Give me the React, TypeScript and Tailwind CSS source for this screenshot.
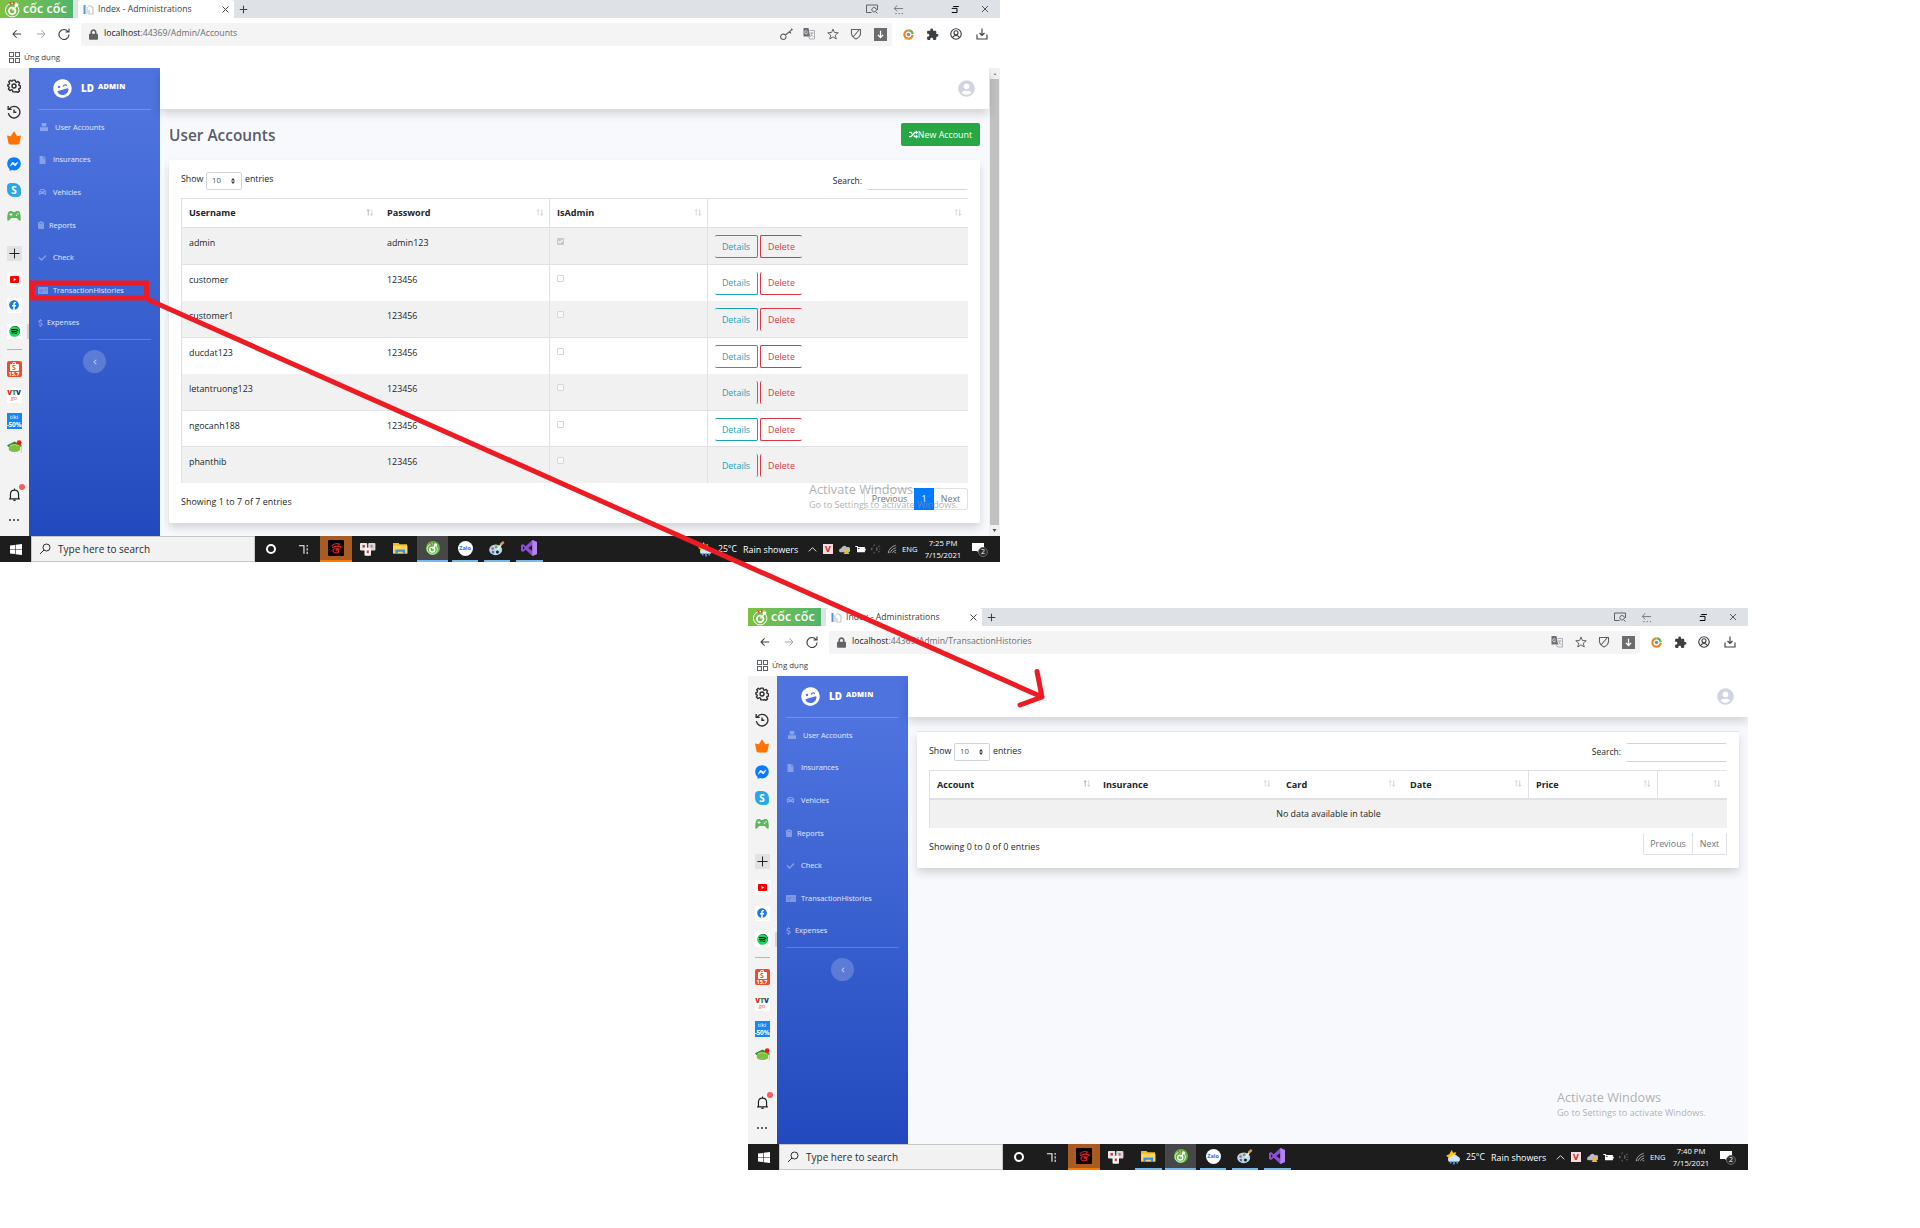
import type { ReactNode } from "react";
import {
  FaCar,
  FaCheck,
  FaChevronLeft,
  FaClipboard,
  FaDollarSign,
  FaFacebook,
  FaFacebookMessenger,
  FaFile,
  FaLaughWink,
  FaLock,
  FaRandom,
  FaSpotify,
  FaUserCircle,
} from "react-icons/fa";
import { MdExtension } from "react-icons/md";

/* ---------- small drawings ---------- */

function CocCocMark({ className }: { className: string }) {
  return (
    <svg viewBox="0 0 24 24" className={className} fill="none">
      <circle cx="11.5" cy="13" r="9.5" stroke="#fff" strokeWidth="1.4" />
      <circle cx="11.5" cy="14" r="4.6" stroke="#fff" strokeWidth="2.6" />
      <path d="M12 13 L20 4" stroke="#fff" strokeWidth="2" />
      <path d="M8 1.5 l2.5 4 M13.5 1 l0.5 4" stroke="#e8452c" strokeWidth="2.2" />
      <path d="M15 6 h5 M17 2 v5" stroke="#fff" strokeWidth="1.8" />
    </svg>
  );
}

function Line({ d, className, w = 1.6 }: { d: string; className: string; w?: number }) {
  return (
    <svg viewBox="0 0 24 24" className={className} fill="none" stroke="currentColor" strokeWidth={w}>
      <path d={d} />
    </svg>
  );
}

const gear =
  "M10 2h4l.7 2.8 1.8.8 2.5-1.5 2.6 2.7-1.4 2.6.7 1.7 2.6.7v3.6l-2.7.7-.8 1.9 1.5 2.500-2.700 2.600-2.500-1.500-1.800.8L14 22h-4l-.7-2.800-1.800-.8L5 19.900l-2.600-2.700 1.400-2.500-.7-1.700L1.500 12.300V9.800l2.200-.7.8-1.800L3 4.800l2.700-2.600L8 3.800l1.400-.6z";

function GearIcon() {
  return (
    <svg viewBox="0 0 24 24" className="size-[14px] text-[#2d2d2d]" fill="none" stroke="currentColor" strokeWidth="2.400">
      <path d={gear} strokeLinejoin="round" />
      <circle cx="12" cy="12" r="3.400" />
    </svg>
  );
}

function HistoryIcon() {
  return (
    <svg viewBox="0 0 24 24" className="size-[14px] text-[#2d2d2d]" fill="none" stroke="currentColor" strokeWidth="2.300">
      <path d="M4 6.500A10 10 0 1 1 2.300 14M2 1.500V7.500H8M12 7.500V12.500H16" />
    </svg>
  );
}

function CrownIcon() {
  return (
    <svg viewBox="0 0 24 24" className="size-[14px]" fill="#ff7300">
      <path d="M0 7.500 6.500 9 12 0.500 17.500 9 24 7.500 21.500 21Q21 23 19 23H5Q3 23 2.500 21Z" />
    </svg>
  );
}

function SkypeIcon() {
  return (
    <div className="relative flex size-[14px] items-center justify-center rounded-full bg-[#28a8ea] text-[10px]/[14px] font-bold text-white">
      <i className="absolute top-0 left-0 size-[8px] rounded-full bg-[#28a8ea]" />
      <i className="absolute right-0 bottom-0 size-[8px] rounded-full bg-[#28a8ea]" />
      <span className="relative">S</span>
    </div>
  );
}

function GamepadIcon() {
  return (
    <svg viewBox="0 0 28 20" className="h-[10px] w-[14px]">
      <path d="M6 0H10L12 2H16L18 0H22Q26 0 27 8T27 19Q24 21 20 14H8Q4 21 1 19 0 15 1 8T6 0Z" fill="#5cb85c" />
      <path d="M8 4V10M5 7H11" stroke="#f3f3f3" strokeWidth="2" />
      <circle cx="19" cy="8.500" r="1.500" fill="#f3f3f3" />
      <circle cx="22" cy="5.500" r="1.500" fill="#f3f3f3" />
    </svg>
  );
}

function ShopeeIcon() {
  return (
    <div className="flex h-[16px] w-[15px] flex-col items-center justify-center rounded-[2px] bg-[#ee4d2d] text-white">
      <i className="h-[2px] w-[4px] rounded-t-full border border-b-0 border-white" />
      <div className="flex h-[7px] w-[9px] items-center justify-center rounded-[1px] bg-white text-[7px]/[7px] font-bold text-[#ee4d2d]">
        S
      </div>
      <span className="text-[5.500px]/[6px] font-bold">15.7</span>
    </div>
  );
}

function HatIcon() {
  return (
    <svg viewBox="0 0 24 22" className="h-[14px] w-[15px]">
      <path d="M0 8 12 2 24 8 22 11H2Z" fill="#2e8b45" />
      <path d="M3 9Q12 5 21 9V16Q12 22 3 16Z" fill="#7cc142" />
      <path d="M5 8.500Q12 6 19 8.500" stroke="#f2d04a" strokeWidth="1.500" fill="none" />
      <path d="M23 8V20" stroke="#f0c93c" strokeWidth="1.500" />
      <circle cx="19.500" cy="4" r="3.800" fill="#f5191b" />
    </svg>
  );
}

function WindowsLogo() {
  return (
    <svg viewBox="0 0 12 12" className="h-[11px] w-[12px]" fill="#fff" preserveAspectRatio="none">
      <path d="M0 1.700 5 1V5.600H0ZM5.600.9 12 0V5.600H5.600ZM0 6.300H5V11L0 10.300ZM5.600 6.300H12V12L5.600 11.100Z" />
    </svg>
  );
}

function FolderIcon() {
  return (
    <svg viewBox="0 0 16 14" className="h-[13px] w-[15px]">
      <path d="M0 1H6L7 2.500H15V12H0Z" fill="#f5b921" />
      <path d="M0 4H15.500V12.500H0Z" fill="#ffd75e" />
      <path d="M2.500 13V8H13V13H10.500V10.500H5V13Z" fill="#3a93dd" />
    </svg>
  );
}

function PaintIcon() {
  return (
    <svg viewBox="0 0 18 16" className="h-[15px] w-[16px]">
      <ellipse cx="7.500" cy="9.500" rx="7.300" ry="6" fill="#bcd9ec" />
      <circle cx="4" cy="8" r="1.500" fill="#e8553a" />
      <circle cx="8" cy="6.200" r="1.500" fill="#59b04c" />
      <circle cx="4.500" cy="12" r="1.500" fill="#3d72c4" />
      <circle cx="9.500" cy="12" r="1.700" fill="#1e1e1e" />
      <path d="M9.500 9.500 14 3" stroke="#e8eef2" strokeWidth="2" />
      <path d="M13 4 16.500.5" stroke="#dd9a54" strokeWidth="2.800" />
    </svg>
  );
}

function VisualStudioIcon() {
  return (
    <svg viewBox="0 0 24 24" className="size-[16px]">
      <path d="M17 0 24 3V21L17 24 7 14.500 3 18 0 16.500V7.500L3 6 7 9.500ZM17 7.500 11 12 17 16.500ZM3 9.500V14.500L5.500 12Z" fill="#8a4fd3" fillRule="evenodd" />
      <path d="M17 0 24 3V21L17 24Z" fill="#b583f0" />
    </svg>
  );
}

function WeatherIcon() {
  return (
    <svg viewBox="0 0 16 16" className="size-[15px]">
      <path d="M6 0 7.500 3 11 2.500 9.500 6 11 9 6 9 2 11 2.500 8 0 6 3.500 4.500Z" fill="#fcc419" />
      <path d="M3 12.500A3 3 0 0 1 5.500 7.500 4 4 0 0 1 12.500 7 3 3 0 0 1 13.500 12.500Z" fill="#cfe6fa" />
      <path d="M5 12V14.500M8.500 12V15.500M12 12V14.500" stroke="#4ba3ef" strokeWidth="1.700" />
    </svg>
  );
}

function GarenaIcon() {
  return (
    <div className="flex size-[16px] items-center justify-center rounded-[1px] bg-[#0c0606]">
      <svg viewBox="0 0 16 16" className="size-[14px]" fill="none" stroke="#dc1f26" strokeWidth="1.300">
        <path d="M3 5.800Q7 1.500 12 3.500L10 5M3.500 7.800Q8 4.500 14 7L12.500 7.500M12.300 9H8V10.500H11V12.800Q6.500 14.500 5 12.300 3.800 10 6.500 8.300" />
      </svg>
    </div>
  );
}

function SolitaireIcon() {
  return (
    <svg viewBox="0 0 16 13" className="h-[13px] w-[16px]">
      <rect x="0" y="0" width="7.200" height="7.500" rx="1" fill="#e9e9ea" />
      <rect x="8.200" y="0" width="7.200" height="7.500" rx="1" fill="#d9d9dc" />
      <rect x="4.500" y="4.800" width="6.500" height="8" rx="1" fill="#f5f5f5" />
      <rect x="2.500" y="2" width="2.400" height="2.600" fill="#d8333d" />
      <rect x="10.600" y="2" width="2" height="2.600" fill="#d56a73" />
      <rect x="6.800" y="7.500" width="2" height="2.600" fill="#d8333d" />
    </svg>
  );
}

function UserGlyph() {
  return (
    <svg viewBox="0 0 14 16" className="mr-[7px] h-[8px] w-[8px]" fill="currentColor" preserveAspectRatio="none">
      <path d="M3 0H11V7H3ZM0 8.500H14V16H0Z" />
    </svg>
  );
}

function CardGlyph() {
  return (
    <svg viewBox="0 0 10 7" className="mr-[5px] h-[7px] w-[10px]">
      <rect width="10" height="7" rx="0.600" fill="currentColor" />
      <path d="M1.500 3H5.500M1.500 4.800H4M7 3H8.500" stroke="#4066d4" strokeWidth="0.500" />
    </svg>
  );
}

/* ---------- browser chrome ---------- */

function Slot({ className, children }: { className: string; children?: ReactNode }) {
  return <div className={`flex shrink-0 items-center justify-center ${className}`}>{children}</div>;
}

function TabStrip() {
  return (
    <div className="flex h-[18px] bg-[#dee1e6]">
      <div className="flex w-[73px] items-center bg-linear-to-r from-[#7cc142] to-[#4fb56a] pl-[4px]">
        <CocCocMark className="size-[17px]" />
        <span className="ml-[2px] text-[12.500px]/[20px] font-semibold tracking-[0.050px] text-white">cốc cốc</span>
      </div>
      <div className="ml-[5px] flex w-[156px] items-center rounded-t-[3px] bg-white pl-[5px]">
        <svg viewBox="0 0 11 11" className="size-[11px]">
          <rect x="0.500" y="1" width="2" height="9" fill="#4a9bd5" />
          <path d="M4 3V10M5 2H8L10 4V10H6V6" stroke="#c3c7cf" fill="none" strokeWidth="1.200" />
        </svg>
        <span className="ml-[4px] w-[94px] text-[8.600px]/[18px] tracking-[0.030px] whitespace-nowrap text-[#3c4043]">Index - Administrations</span>
        <Line d="M4 4 20 20M20 4 4 20" w={2.600} className="ml-[29px] size-[9px] text-[#3c4043]" />
      </div>
      <Slot className="w-[18px]">
        <Line d="M12 2V22M2 12H22" w={2.800} className="size-[9px] text-[#3c4043]" />
      </Slot>
      <div className="ml-auto flex">
        <Slot className="w-[26px]">
          <Line d="M11 19H1V4H23V14M19 17A4.500 4.500 0 1 1 19 10 4.500 4.500 0 0 1 19 17L23 21" w={2} className="size-[12px] text-[#5f6368]" />
        </Slot>
        <Slot className="w-[26px]">
          <Line d="M9 3 3 10 9 16M3 10H22M5 21H8M12 21H15M19 21H22" w={2} className="size-[11px] text-[#6b6f74]" />
        </Slot>
        <Slot className="ml-[29px] w-[30px]">
          <Line d="M6 4H21M2 9H16M16 9V20M2 20H16" w={2.600} className="size-[9px] text-black" />
        </Slot>
        <Slot className="w-[30px]">
          <Line d="M3 3 21 21M21 3 3 21" w={2.200} className="size-[8px] text-[#202124]" />
        </Slot>
      </div>
    </div>
  );
}

function Toolbar({ path, hasKey }: { path: string; hasKey: boolean }) {
  return (
    <div className="flex h-[32px] items-center pl-[5px]">
      <Slot className="w-[24px]">
        <Line d="M22 12H3M11 3 2.500 12 11 21" w={2.600} className="size-[10px] text-[#3c4043]" />
      </Slot>
      <Slot className="w-[23px]">
        <Line d="M2 12H21M13 3 21.500 12 13 21" w={2.400} className="size-[10px] text-[#a3a5a8]" />
      </Slot>
      <Slot className="w-[23px]">
        <Line d="M20 7A10 10 0 1 0 22 13M22 1V8H15" w={2.300} className="size-[12px] text-[#3c4043]" />
      </Slot>
      <div className="ml-[6px] flex h-[23px] w-[811px] items-center rounded-[2px] bg-[#f4f4f4] pl-[8px]">
        <FaLock className="h-[11px] w-[9px] text-[#5f6368]" />
        <span className="ml-[6px] text-[8.700px] whitespace-nowrap text-[#6b6e72]">
          <span className="text-[#202124]">localhost</span>:44369/Admin/{path}
        </span>
        <div className="ml-auto flex text-[#5f6368]">
          {hasKey && (
            <Slot className="w-[22px]">
              <Line d="M11 15A5 5 0 1 1 10 13L22 3M18 6 20 10M21 1 23 4" w={2.200} className="size-[13px]" />
            </Slot>
          )}
          <Slot className="w-[24px]">
            <svg viewBox="0 0 24 24" className="size-[12px]">
              <path d="M1 0H11L14 17H1Z" fill="#6a6d71" />
              <path d="M9 7A3 3 0 1 0 9 10H6.500" stroke="#fff" strokeWidth="1.500" fill="none" />
              <path d="M13 5H23V22H13L11 17M14 10H21M18 9Q18 15 14 18M16 13 21 18" stroke="#9a9da1" strokeWidth="1.600" fill="none" />
            </svg>
          </Slot>
          <Slot className="w-[23px]">
            <Line d="M12 2 14.800 9 22.500 9.500 16.500 14.300 18.500 22 12 17.700 5.500 22 7.500 14.300 1.500 9.500 9.200 9Z" w={2} className="size-[12px]" />
          </Slot>
          <Slot className="w-[24px]">
            <Line d="M3 3H21V12Q20 18 12 22 4 18 3 12ZM18 4 6 18" w={2.200} className="size-[12px]" />
          </Slot>
          <Slot className="w-[24px]">
            <div className="flex size-[13px] items-center justify-center bg-[#6a6c6e] text-white">
              <Line d="M12 2V20M5 13 12 20 19 13" w={3.400} className="size-[9px]" />
            </div>
          </Slot>
        </div>
      </div>
      <div className="ml-[4px] flex text-[#3c4043]">
        <Slot className="w-[25px]">
          <svg viewBox="0 0 24 24" className="size-[11px]" fill="none">
            <path d="M21 13A9 9 0 1 1 12 3" stroke="#f58220" strokeWidth="5" />
            <path d="M12 3A9 9 0 0 1 21 11" stroke="#5cb85c" strokeWidth="5" />
            <circle cx="12" cy="12" r="4" fill="#8d9196" />
          </svg>
        </Slot>
        <Slot className="w-[23px]">
          <MdExtension className="size-[13px]" />
        </Slot>
        <Slot className="w-[24px]">
          <svg viewBox="0 0 24 24" className="size-[12px]" fill="none" stroke="currentColor" strokeWidth="2.300">
            <circle cx="12" cy="12" r="10.500" />
            <circle cx="12" cy="9.500" r="4" />
            <path d="M5 19Q7 15 12 15T19 19" />
          </svg>
        </Slot>
        <Slot className="w-[27px]">
          <Line d="M12 1V15M7 10 12 15 17 10M2 13V22H22V13" w={2.300} className="size-[12px]" />
        </Slot>
      </div>
    </div>
  );
}

function Bookmarks() {
  return (
    <div className="flex h-[18px] items-start pl-[9px]">
      <div className="mt-[2px] grid size-[11px] grid-cols-2 gap-[1px]">
        <i className="border border-[#5f6368]" />
        <i className="border border-[#5f6368]" />
        <i className="border border-[#5f6368]" />
        <i className="border border-[#5f6368]" />
      </div>
      <span className="ml-[4px] text-[7.900px]/[14px] text-[#3c4043]">Ứng dụng</span>
    </div>
  );
}

function AppRail() {
  const tile = "flex size-[15px] items-center justify-center rounded-[1px] bg-white";
  return (
    <div className="flex w-[29px] flex-col bg-[#f3f3f3] pt-[5px]">
      <div className="flex w-[29px] flex-col items-center pr-[1px]">
        <Slot className="h-[26px]"><GearIcon /></Slot>
        <Slot className="h-[26px]"><HistoryIcon /></Slot>
        <Slot className="h-[26px]"><CrownIcon /></Slot>
        <Slot className="h-[26px]"><FaFacebookMessenger className="size-[14px] text-[#0a7cff]" /></Slot>
        <Slot className="h-[26px]"><SkypeIcon /></Slot>
        <Slot className="h-[26px]"><GamepadIcon /></Slot>
        <Slot className="mt-[11px] h-[26px]">
          <div className="flex size-[15px] items-center justify-center rounded-[1px] bg-[#e2e2e2]">
            <Line d="M12 1V23M1 12H23" w={2.200} className="size-[11px] text-[#222]" />
          </div>
        </Slot>
        <Slot className="h-[26px]">
          <div className={tile}>
            <svg viewBox="0 0 9 7" className="h-[7px] w-[9px]">
              <rect width="9" height="7" rx="1" fill="#f00" />
              <path d="M3.700 2 6.200 3.500 3.700 5Z" fill="#fff" />
            </svg>
          </div>
        </Slot>
        <Slot className="h-[26px]"><div className={tile}><FaFacebook className="size-[10px] text-[#1877f2]" /></div></Slot>
      </div>
      <div className="flex h-[26px] w-full items-center justify-end">
        <div className="mr-[5px] flex size-[15px] items-center justify-center rounded-[1px] bg-white">
          <div className="flex size-[10px] items-center justify-center rounded-full bg-black">
            <FaSpotify className="size-[11px] shrink-0 text-[#1ed760]" />
          </div>
        </div>
        <i className="h-[15px] w-[2px] bg-[#d4d4d4]" />
      </div>
      <div className="flex w-[29px] flex-col items-center pr-[1px]">
        <i className="mt-[5px] mb-[6px] h-px w-[15px] bg-[#b5b5b5]" />
        <Slot className="h-[26px]"><ShopeeIcon /></Slot>
        <Slot className="h-[26px]">
          <div className="flex size-[15px] flex-col items-center rounded-[1px] bg-white pt-[1px]">
            <span className="text-[7px]/[7px] font-extrabold tracking-[-0.200px]">
              <b className="text-[#d8262c]">V</b><b className="text-[#1b9a4a]">T</b><b className="text-[#23358c]">V</b>
            </span>
            <span className="text-[6px]/[5px] text-[#e0575b] italic">go</span>
          </div>
        </Slot>
        <Slot className="h-[26px]">
          <div className="flex h-[16px] w-[15px] flex-col items-center justify-center overflow-hidden bg-[#1586fb] font-bold text-white">
            <span className="text-[6px]/[7px] font-normal">tiki</span>
            <span className="text-[6.500px]/[7px] tracking-[-0.200px]">-50%</span>
          </div>
        </Slot>
        <Slot className="h-[26px]"><HatIcon /></Slot>
        <Slot className="relative mt-[21px] h-[26px]">
          <Line d="M2 20H22M4.500 19.500V11Q5 4 12 4T19.500 11V19.500M12 1V4M10 23H14" w={2.200} className="size-[13px] text-[#222]" />
          <i className="absolute top-[3px] left-[11px] size-[6px] rounded-full bg-[#fb5a5f]" />
        </Slot>
        <Slot className="h-[26px] gap-[2px]">
          <i className="size-[2px] rounded-full bg-[#333]" />
          <i className="size-[2px] rounded-full bg-[#333]" />
          <i className="size-[2px] rounded-full bg-[#333]" />
        </Slot>
      </div>
    </div>
  );
}

/* ---------- admin panel ---------- */

function NavItem({ icon, label }: { icon: ReactNode; label: string }) {
  return (
    <div className="flex h-[32.600px] items-center pl-[9px] text-white/35">
      {icon}
      <span className="text-[7.400px] whitespace-nowrap text-white/85">{label}</span>
    </div>
  );
}

function Sidebar() {
  return (
    <div className="flex w-[131px] flex-col bg-linear-to-b from-[#4e73df] from-10% to-[#224abe] text-white">
      <div className="flex h-[41px] items-center pl-[24px]">
        <FaLaughWink className="size-[19px] -rotate-15" />
        <span className="mt-px ml-[9px] text-[9.800px] font-extrabold">LD</span>
        <span className="mb-[5px] ml-[4px] text-[7.300px] font-extrabold tracking-[0.250px]">ADMIN</span>
      </div>
      <i className="mr-[9px] ml-[9px] h-px bg-white/20" />
      <div className="flex flex-col pt-px">
        <NavItem icon={<i className="flex pl-[2px]"><UserGlyph /></i>} label="User Accounts" />
        <NavItem icon={<FaFile className="mr-[6px] h-[8px] w-[9px]" />} label="Insurances" />
        <NavItem icon={<FaCar className="mr-[6px] h-[8px] w-[9px]" />} label="Vehicles" />
        <NavItem icon={<FaClipboard className="mr-[5px] h-[8px] w-[6px]" />} label="Reports" />
        <NavItem icon={<FaCheck className="mr-[6px] h-[8px] w-[9px]" />} label="Check" />
        <NavItem icon={<CardGlyph />} label="TransactionHistories" />
        <NavItem icon={<FaDollarSign className="mr-[4px] h-[8px] w-[5px]" />} label="Expenses" />
      </div>
      <i className="mr-[9px] ml-[9px] h-px bg-white/20" />
      <div className="mt-[10px] flex size-[23px] items-center justify-center self-center rounded-full bg-white/20 text-white/60">
        <FaChevronLeft className="size-[6px]" />
      </div>
    </div>
  );
}

function SortMark({ lead = false }: { lead?: boolean }) {
  return (
    <svg viewBox="0 0 8 8" className="mb-[2px] h-[7px] w-[8px]" fill="none" strokeWidth="0.900">
      <path d="M2 7.500V0.700M.4 2.300 2 .7 3.600 2.300" stroke={lead ? "#a0a2a4" : "#cfd1d3"} />
      <path d="M6 .5V7.300M4.400 5.700 6 7.300 7.600 5.700" stroke="#c5c7c9" />
    </svg>
  );
}

function HeadCell({ label, className, lead }: { label: string; className: string; lead?: boolean }) {
  return (
    <div className={`flex items-center justify-between border-[#dee2e6] text-[9.100px] font-bold text-[#212529] ${className}`}>
      <span>{label}</span>
      <SortMark lead={lead} />
    </div>
  );
}

function LengthAndSearch({ open }: { open: boolean }) {
  return (
    <div className="flex h-[18px] items-center text-[8.800px] text-[#212529]">
      <span className={open ? "w-[25px] pb-[2px]" : "w-[25px] pb-px"}>Show</span>
      <div className="flex h-[18px] w-[36px] items-center rounded-[2px] border border-[#ced4da] pl-[5px] text-[7.800px] text-[#495057]">
        10
        <svg viewBox="0 0 4 6" className="ml-[10px] h-[6px] w-[4px]" fill="#343a40">
          <path d="M2 0 4 2.500H0ZM2 6 0 3.500H4Z" />
        </svg>
      </div>
      <span className={open ? "ml-[3px] pb-[2px]" : "ml-[3px] pb-px"}>entries</span>
      <span className="ml-auto text-[8.500px]">Search:</span>
      <div
        className={
          open
            ? "ml-[5px] h-[18px] w-[101px] rounded-[2px] border-b border-[#ced4da]"
            : "ml-[5px] h-[19px] w-[101px] rounded-[2px] border-y border-[#ced4da]"
        }
      />
    </div>
  );
}

type Account = { name: string; pass: string; admin?: boolean; row: string; btn: string };

const accounts: Account[] = [
  { name: "admin", pass: "admin123", admin: true, row: "h-[37px] border-b bg-[#f1f1f1]", btn: "border-y" },
  { name: "customer", pass: "123456", row: "h-[36px]", btn: "border-b" },
  { name: "customer1", pass: "123456", row: "h-[37px] border-b bg-[#f1f1f1]", btn: "border-t" },
  { name: "ducdat123", pass: "123456", row: "h-[36px]", btn: "border-y" },
  { name: "letantruong123", pass: "123456", row: "h-[37px] border-b bg-[#f1f1f1]", btn: "" },
  { name: "ngocanh188", pass: "123456", row: "h-[36px] border-b", btn: "border-y" },
  { name: "phanthib", pass: "123456", row: "h-[36px] bg-[#f1f1f1]", btn: "" },
];

function AccountRow({ a }: { a: Account }) {
  return (
    <div className={`flex border-[#dee2e6] text-[8.900px] text-[#212529] ${a.row}`}>
      <span className="w-[198px] pt-[8px] pl-[7px]">{a.name}</span>
      <span className="w-[169px] pt-[8px] pl-[7px]">{a.pass}</span>
      <div className="w-[158px] border-l border-[#dee2e6] pt-[10px] pl-[7px]">
        {a.admin ? (
          <div className="flex size-[7px] items-center justify-center rounded-[1px] bg-[#c9c9c9] text-white">
            <FaCheck className="size-[5px]" />
          </div>
        ) : (
          <div className="size-[7px] rounded-[1px] border border-[#d6d6d6] bg-white/50" />
        )}
      </div>
      <div className="flex flex-1 gap-[2px] border-l border-[#dee2e6] pt-[7px] pl-[7px]">
        <div className={`flex h-[23px] w-[43px] items-center justify-center rounded-[2px] border-r border-[#17a2b8] text-[#17a2b8] ${a.btn}`}>
          Details
        </div>
        <div className={`flex h-[23px] w-[42px] items-center justify-center rounded-[2px] border-l border-[#dc3545] text-[#dc3545] ${a.btn}`}>
          Delete
        </div>
      </div>
    </div>
  );
}

function AccountsPage() {
  return (
    <div className="flex flex-1 flex-col bg-[#f8f9fc] pr-[9px] pl-[9px]">
      <div className="mt-[14px] flex h-[23px] items-center justify-between">
        <span className="pt-[3px] text-[15.400px] font-semibold text-[#5a5c69]">User Accounts</span>
        <div className="flex h-[23px] w-[79px] items-center justify-center rounded-[2px] bg-[#28a745] text-[8.900px] text-white">
          <FaRandom className="size-[9px]" />
          <span className="whitespace-nowrap">New Account</span>
        </div>
      </div>
      <div className="mt-[14px] h-[363px] rounded-[2px] bg-white px-[12px] pt-[12px] shadow-[0_5px_9px_rgba(0,0,0,0.15)]">
        <LengthAndSearch open />
        <div className="mt-[8px] flex flex-col border-t border-l border-[#dee2e6]">
          <div className="flex h-[29px] border-b border-[#dee2e6]">
            <HeadCell label="Username" lead className="w-[198px] pr-[6px] pl-[7px]" />
            <HeadCell label="Password" className="w-[169px] pr-[5px] pl-[7px]" />
            <HeadCell label="IsAdmin" className="w-[158px] border-l pr-[5px] pl-[7px]" />
            <HeadCell label="" className="flex-1 border-l pr-[6px] pl-[7px]" />
          </div>
          {accounts.map((a) => (
            <AccountRow key={a.name} a={a} />
          ))}
        </div>
        <div className="mt-[5px] flex items-start justify-between text-[8.900px]">
          <span className="pt-[7px] tracking-[0.040px] text-[#212529]">Showing 1 to 7 of 7 entries</span>
          <div className="flex h-[22px] rounded-[2px] border border-[#dee2e6] text-[#6c757d]">
            <span className="flex w-[49px] items-center justify-center">Previous</span>
            <span className="-my-px flex w-[20px] items-center justify-center bg-[#007bff] text-white">1</span>
            <span className="flex w-[33px] items-center justify-center">Next</span>
          </div>
        </div>
      </div>
    </div>
  );
}

function HistoriesPage() {
  return (
    <div className="flex flex-1 flex-col bg-[#f8f9fc] pr-[9px] pl-[9px]">
      <div className="mt-[14px] h-[137px] rounded-[2px] border-t border-[#e1e3e8] bg-white px-[12px] pt-[11px] shadow-[0_5px_9px_rgba(0,0,0,0.15)]">
        <LengthAndSearch open={false} />
        <div className="mt-[9px] flex flex-col border-t border-l border-[#dee2e6]">
          <div className="flex h-[29px] border-b-2 border-[#dee2e6]">
            <HeadCell label="Account" lead className="w-[166px] pr-[5px] pl-[7px]" />
            <HeadCell label="Insurance" className="w-[183px] pr-[8px] pl-[7px]" />
            <HeadCell label="Card" className="w-[124px] pr-[7px] pl-[7px]" />
            <HeadCell label="Date" className="w-[125px] pr-[6px] pl-[7px]" />
            <HeadCell label="Price" className="w-[129px] border-l pr-[6px] pl-[7px]" />
            <HeadCell label="" className="flex-1 border-l pr-[6px] pl-[7px]" />
          </div>
          <div className="flex h-[28px] items-center justify-center bg-[#f1f1f1] text-[8.900px] text-[#212529]">
            No data available in table
          </div>
        </div>
        <div className="mt-[5px] flex items-start justify-between text-[8.900px]">
          <span className="pt-[7px] tracking-[0.040px] text-[#212529]">Showing 0 to 0 of 0 entries</span>
          <div className="flex h-[22px] rounded-[2px] border border-t-0 border-[#dee2e6] text-[#6c757d]">
            <span className="flex w-[49px] items-center justify-center border-r border-[#dee2e6]">Previous</span>
            <span className="flex w-[33px] items-center justify-center">Next</span>
          </div>
        </div>
      </div>
    </div>
  );
}

/* ---------- taskbar ---------- */

function Taskbar({ time, explorerOpen }: { time: string; explorerOpen: boolean }) {
  return (
    <div className="flex h-[26px] bg-[#1d1d1d] text-white">
      <Slot className="w-[31px]"><WindowsLogo /></Slot>
      <div className="flex w-[224px] items-center border border-[#c8c8c8] bg-[#f2f2f2] pl-[7px] text-[#2b2b2b]">
        <svg viewBox="0 0 24 24" className="size-[12px]" fill="none" stroke="currentColor" strokeWidth="2">
          <circle cx="15" cy="9" r="7" />
          <path d="M10 14 2 22" />
        </svg>
        <span className="pt-px ml-[7px] text-[10px]">Type here to search</span>
      </div>
      <Slot className="w-[32px]"><i className="size-[10px] rounded-full border-2 border-white" /></Slot>
      <Slot className="w-[33px]">
        <Line d="M2 4H13V21M20 2V6M20 9V14M20 17V22" w={2.300} className="size-[11px]" />
      </Slot>
      <Slot className="w-[32px] border-b-2 border-[#ff7800] bg-[#a85c24]"><GarenaIcon /></Slot>
      <Slot className="w-[31px]"><SolitaireIcon /></Slot>
      <Slot className={explorerOpen ? "ml-[4px] w-[27px] border-b-2 border-[#76b9ed]" : "ml-[4px] w-[27px] border-b-2 border-transparent"}>
        <FolderIcon />
      </Slot>
      <Slot className="ml-[3px] w-[31px] border-b-2 border-[#76b9ed] bg-[#474747]">
        <div className="flex size-[14px] items-center justify-center rounded-full bg-[#62b846]">
          <CocCocMark className="size-[13px]" />
        </div>
      </Slot>
      <Slot className="ml-[4px] w-[26px] border-b-2 border-[#76b9ed]">
        <div className="flex size-[15px] items-center justify-center rounded-full bg-white text-[5.500px] font-bold text-[#1a73e8]">Zalo</div>
      </Slot>
      <Slot className="ml-[6px] w-[26px] border-b-2 border-[#76b9ed]"><PaintIcon /></Slot>
      <Slot className="ml-[6px] w-[27px] border-b-2 border-[#76b9ed] pr-px"><VisualStudioIcon /></Slot>
      <div className="ml-[155px] flex items-center text-[9px]">
        <WeatherIcon />
        <span className="ml-[5px] w-[25px] pt-px text-[8.600px]">25°C</span>
        <span className="w-[62px] pt-px text-[8.900px] whitespace-nowrap">Rain showers</span>
        <Slot className="w-[15px]"><Line d="M2 17 12 7 22 17" w={2.300} className="size-[9px]" /></Slot>
        <Slot className="w-[16px]">
          <div className="flex size-[10px] items-center justify-center bg-[#f3dcdc] text-[9px] font-bold text-[#c1272d]">V</div>
        </Slot>
        <Slot className="w-[16px]">
          <svg viewBox="0 0 12 10" className="h-[9px] w-[11px]">
            <path d="M1 8A2.500 2.500 0 0 1 2.500 3.500 3.300 3.300 0 0 1 8.500 2.500 2.800 2.800 0 0 1 11 8Z" fill="#b9bcbf" />
            <path d="M8.200 4.500 11.500 10H5Z" fill="#fdb813" />
          </svg>
        </Slot>
        <Slot className="w-[16px]">
          <svg viewBox="0 0 12 8" className="h-[7px] w-[11px]" fill="#fff">
            <path d="M2 1H11V7H2ZM11 3H12V5H11ZM0 0H3V1H0Z" />
            <path d="M3 2.500H5V3.500H3Z" fill="#1d1d1d" />
          </svg>
        </Slot>
        <Slot className="w-[16px]">
          <Line d="M2 9V15M6 4 9 2M6 20 9 22M14 8V16M19 4V7M21 11V13M19 17V20" w={1.800} className="size-[10px] text-[#a5a5a5]" />
        </Slot>
        <Slot className="w-[15px]">
          <Line d="M3 21Q5 8 21 3M8 21Q10 12 22 9M13 21Q15 16 22 15M18 21H22M3 21H6" w={1.800} className="size-[10px] text-[#c9c9c9]" />
        </Slot>
        <span className="ml-[3px] w-[16px] pt-px text-[7.600px]">ENG</span>
        <div className="flex w-[50px] flex-col items-center text-[7.700px]/[12px]">
          <span>{time}</span>
          <span>7/15/2021</span>
        </div>
        <div className="relative ml-[4px] h-[16px] w-[16px]">
          <svg viewBox="0 0 12 12" className="mt-[2px] size-[12px]" fill="#fff">
            <path d="M0 0H12V8H8V11L5 8H0Z" />
          </svg>
          <span className="absolute top-[6px] left-[6px] flex size-[10px] items-center justify-center rounded-full border border-[#666] bg-[#2b2b2b] text-[7px]">
            2
          </span>
        </div>
      </div>
    </div>
  );
}

function Scrollbar() {
  return (
    <div className="flex w-[11px] flex-col items-center bg-[#f1f1f1]">
      <Slot className="h-[11px]">
        <svg viewBox="0 0 4 3" className="h-[2px] w-[4px]" fill="#8a8a8a"><path d="M2 0 4 3H0Z" /></svg>
      </Slot>
      <i className="w-[9px] flex-1 bg-[#c1c1c1]" />
      <Slot className="h-[11px]">
        <svg viewBox="0 0 4 3" className="h-[3px] w-[5px]" fill="#505050"><path d="M2 3 4 0H0Z" /></svg>
      </Slot>
    </div>
  );
}

type DesktopProps = {
  path: string;
  hasKey?: boolean;
  scroll?: boolean;
  time: string;
  explorerOpen?: boolean;
  children: ReactNode;
};

function Desktop({ path, hasKey = false, scroll = false, time, explorerOpen = false, children }: DesktopProps) {
  return (
    <div className="relative flex h-[562px] w-[1000px] flex-col overflow-hidden bg-white">
      <TabStrip />
      <Toolbar path={path} hasKey={hasKey} />
      <Bookmarks />
      <div className="flex h-[468px] overflow-hidden">
        <AppRail />
        <Sidebar />
        <div className="flex min-w-0 flex-1 flex-col">
          <div className="relative flex h-[41px] items-center justify-end bg-white pr-[14px] shadow-[0_5px_9px_rgba(0,0,0,0.15)]">
            <FaUserCircle className="size-[17px] text-[#d1d3e2]" />
          </div>
          {children}
        </div>
        {scroll && <Scrollbar />}
      </div>
      <Taskbar time={time} explorerOpen={explorerOpen} />
      <div className="absolute top-[480px] left-[809px] flex flex-col whitespace-nowrap text-[#8e8e8e]/70">
        <span className="text-[12.700px]/[18px]">Activate Windows</span>
        <span className="text-[9.100px]/[13px]">Go to Settings to activate Windows.</span>
      </div>
    </div>
  );
}

export default function App() {
  return (
    <div className="relative h-[1228px] w-[1920px] overflow-hidden bg-white font-['Open_Sans',sans-serif]">
      <div className="absolute top-0 left-0">
        <Desktop path="Accounts" hasKey scroll time="7:25 PM">
          <AccountsPage />
        </Desktop>
      </div>
      <div className="absolute top-[608px] left-[748px]">
        <Desktop path="TransactionHistories" time="7:40 PM" explorerOpen>
          <HistoriesPage />
        </Desktop>
      </div>
      <svg viewBox="0 0 1920 1228" className="absolute inset-0 size-full" fill="none" stroke="#ed1c24" strokeWidth="5">
        <rect x="32.500" y="283" width="114" height="15" />
        <path d="M149 300 1042 697M1037 671.500 1042 697 1020 705" strokeLinecap="round" strokeLinejoin="round" />
      </svg>
    </div>
  );
}
